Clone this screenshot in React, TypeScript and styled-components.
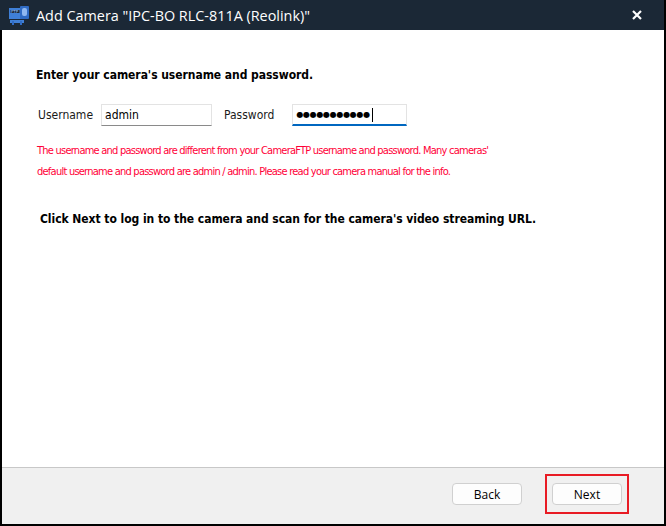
import React from "react";
import styled, { createGlobalStyle } from "styled-components";

const Global = createGlobalStyle`
  html, body { margin: 0; padding: 0; background: #fff; }
  body { width: 666px; height: 526px; overflow: hidden; }
`;

const Window = styled.div`
  width: 666px;
  height: 526px;
  box-sizing: border-box;
  display: flex;
  flex-direction: column;
  border-right: 2px solid #000;
  background: #fff;
`;

const TitleBar = styled.div`
  height: 30px;
  flex: none;
  background: #1b2836;
  display: flex;
  align-items: center;
  padding-left: 8px;
  padding-right: 22px;
  color: #fff;
`;

const Title = styled.div`
  margin-left: 6px;
  font-family: "Open Sans", "Noto Sans", sans-serif;
  font-size: 14.4px;
  color: #fff;
  flex: 1;
  white-space: nowrap;
`;

const Body = styled.div`
  flex: 1;
  display: flex;
  flex-direction: column;
  border-left: 2px solid #000;
  border-bottom: 2px solid #000;
`;

const Content = styled.div`
  flex: 1;
  padding: 38px 0 0 34px;
  font-family: Tahoma, "DejaVu Sans Condensed", "Liberation Sans", sans-serif;
  font-size: 12px;
`;

const Heading = styled.div<{ $indent?: number }>`
  font-weight: bold;
  color: #000;
  font-size: 12px;
  margin-left: ${(p) => p.$indent ?? 0}px;
  letter-spacing: -0.05px;
`;

const FieldRow = styled.div`
  display: flex;
  align-items: center;
  margin-top: 22px;
  margin-left: 2px;
`;

const Label = styled.span<{ $gap: number }>`
  color: #1a1a1a;
  margin-right: ${(p) => p.$gap}px;
`;

const Input = styled.div<{ $w: number; $focused?: boolean }>`
  width: ${(p) => p.$w}px;
  height: 22px;
  box-sizing: border-box;
  border: 1px solid #e3e3e3;
  border-bottom: ${(p) => (p.$focused ? "2px solid #0067c0" : "1px solid #8a8a8a")};
  display: flex;
  align-items: center;
  padding-left: 3px;
  margin-right: 12px;
  color: #000;
  font-size: 12px;
`;

const Dots = styled.span`
  font-family: "DejaVu Sans", sans-serif;
  font-size: 8px;
  letter-spacing: -0.3px;
`;

const Caret = styled.span`
  display: inline-block;
  width: 1px;
  height: 14px;
  background: #000;
  margin-left: 2px;
`;

const Warning = styled.p`
  color: #ff0037;
  margin: 14px 0 0 1px;
  line-height: 21px;
  font-family: "DejaVu Sans Condensed", sans-serif;
  font-size: 11px;
  letter-spacing: -0.76px;
  white-space: nowrap;
`;

const Spacer = styled.div`
  height: 30px;
`;

const Footer = styled.div`
  height: 57px;
  flex: none;
  box-sizing: border-box;
  background: #f0f0f0;
  border-top: 1px solid #c8c8c8;
  display: flex;
  align-items: center;
  justify-content: flex-end;
  padding: 0 35px 4px 0;
  gap: 23px;
`;

const Button = styled.button`
  width: 70px;
  height: 22px;
  background: #fdfdfd;
  border: 1px solid #d0d0d0;
  border-radius: 4px;
  font-family: "Open Sans", "Noto Sans", sans-serif;
  font-size: 12px;
  color: #000;
  padding: 0;
`;

const Highlight = styled.div`
  padding: 7px 5px;
  border: 2px solid #e81b24;
  display: flex;
`;

const Close = () => (
  <svg width="10" height="10" viewBox="0 0 10 10">
    <path d="M1 1 L9 9 M9 1 L1 9" stroke="#fff" strokeWidth="2.2" />
  </svg>
);

const AppIcon = () => (
  <svg width="22" height="20" viewBox="0 0 22 20">
    <rect x="1" y="3" width="12" height="11" fill="#3f7fd6" />
    <rect x="2.5" y="5" width="9" height="3" fill="#1b2836" />
    <text x="3" y="8" fontSize="4" fill="#9fc4ff" fontFamily="DejaVu Sans">FTP</text>
    <rect x="12" y="1" width="9" height="13" rx="1" fill="#2f6bc4" />
    <rect x="14" y="3" width="5" height="8" rx="2" fill="#8fb8f0" />
    <rect x="2" y="15" width="14" height="3" fill="#3f7fd6" />
    <rect x="4" y="16" width="2" height="4" fill="#2f6bc4" />
    <rect x="12" y="16" width="2" height="4" fill="#2f6bc4" />
  </svg>
);

export default function App() {
  return (
    <>
      <Global />
      <Window>
        <TitleBar>
          <AppIcon />
          <Title>Add Camera "IPC-BO RLC-811A (Reolink)"</Title>
          <Close />
        </TitleBar>
        <Body>
          <Content>
            <Heading>Enter your camera's username and password.</Heading>
            <FieldRow>
              <Label $gap={8}>Username</Label>
              <Input $w={111}>admin</Input>
              <Label $gap={18}>Password</Label>
              <Input $w={115} $focused>
                <Dots>●●●●●●●●●●●</Dots>
                <Caret />
              </Input>
            </FieldRow>
            <Warning>
              The username and password are different from your CameraFTP username and password. Many cameras'
              <br />
              default username and password are admin / admin. Please read your camera manual for the info.
            </Warning>
            <Spacer />
            <Heading $indent={4}>Click Next to log in to the camera and scan for the camera's video streaming URL.</Heading>
          </Content>
          <Footer>
            <Button>Back</Button>
            <Highlight>
              <Button>Next</Button>
            </Highlight>
          </Footer>
        </Body>
      </Window>
    </>
  );
}
